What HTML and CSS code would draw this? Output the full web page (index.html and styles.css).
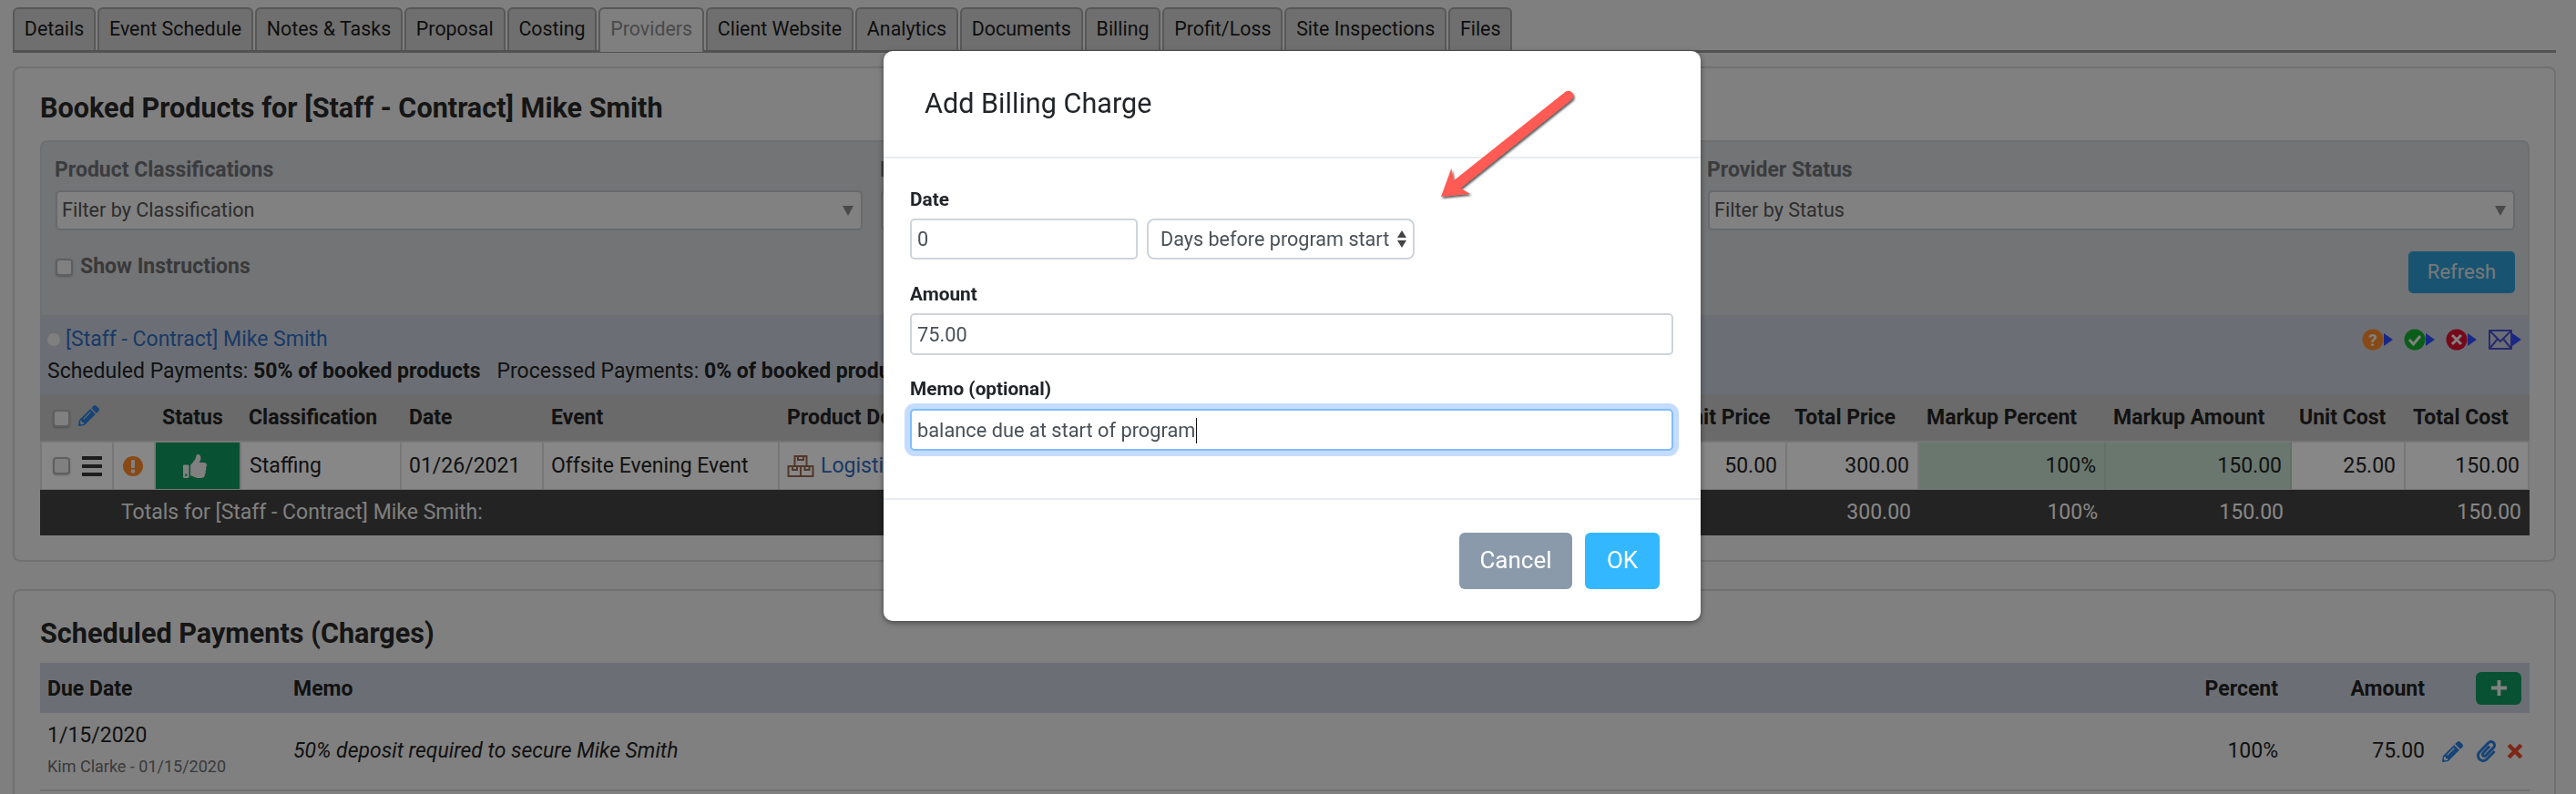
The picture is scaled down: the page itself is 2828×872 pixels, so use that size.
FILE: index.html
```html
<!DOCTYPE html>
<html lang="en">
<head>
<meta charset="utf-8">
<title>Add Billing Charge</title>
<link rel="stylesheet" href="styles.css">
</head>
<body>
<svg class="defs" aria-hidden="true">
  <symbol id="i-pencil" viewBox="0 0 512 512"><path d="M497.9 142.1l-46.1 46.1c-4.7 4.7-12.3 4.7-17 0l-111-111c-4.7-4.7-4.7-12.3 0-17l46.1-46.1c18.7-18.7 49.1-18.7 67.9 0l60.1 60.1c18.8 18.7 18.8 49.1 0 67.9zM284.2 99.8L21.6 362.4.4 483.9c-2.9 16.4 11.4 30.6 27.8 27.8l121.5-21.3 262.6-262.6c4.7-4.7 4.7-12.3 0-17l-111-111c-4.8-4.7-12.4-4.7-17.1 0zM124.1 339.9c-5.5-5.5-5.5-14.3 0-19.8l154-154c5.5-5.5 14.3-5.5 19.8 0s5.5 14.3 0 19.8l-154 154c-5.5 5.5-14.3 5.5-19.8 0zM88 424h48v36.3l-64.5 11.3-31.1-31.1L51.7 376H88v48z"/></symbol>
  <symbol id="i-arrow" viewBox="0 0 10 14"><path d="M0 0l10 7-10 7z"/></symbol>
</svg>

<nav class="tabs">
  <a class="tab">Details</a><a class="tab">Event Schedule</a><a class="tab">Notes &amp; Tasks</a><a class="tab">Proposal</a><a class="tab">Costing</a><a class="tab tab-active">Providers</a><a class="tab">Client Website</a><a class="tab">Analytics</a><a class="tab">Documents</a><a class="tab">Billing</a><a class="tab">Profit/Loss</a><a class="tab">Site Inspections</a><a class="tab">Files</a>
</nav>

<section class="panel panel-products">
  <h2 class="panel-title">Booked Products for [Staff - Contract] Mike Smith</h2>

  <div class="filters">
    <div class="filter-grid">
      <div class="filter">
        <div class="filter-label">Product Classifications</div>
        <div class="select"><span>Filter by Classification</span><i class="caret"></i></div>
      </div>
      <div class="filter">
        <div class="filter-label">Event Dates</div>
        <div class="select"><span>Filter by Event</span><i class="caret"></i></div>
      </div>
      <div class="filter">
        <div class="filter-label">Provider Status</div>
        <div class="select"><span>Filter by Status</span><i class="caret"></i></div>
      </div>
    </div>
    <div class="filter-actions">
      <label class="check-label"><span class="checkbox"></span>Show Instructions</label>
      <button class="btn-refresh">Refresh</button>
    </div>
  </div>

  <div class="provider">
    <div class="provider-top">
      <div class="provider-name"><span class="dot"></span><a class="link">[Staff - Contract] Mike Smith</a></div>
      <div class="provider-icons">
        <svg class="pi" viewBox="0 0 34 24"><circle cx="11" cy="12" r="11.500" fill="#ff8a2a"/><text x="11" y="19" class="pi-q">?</text><use href="#i-arrow" x="23" y="5" width="10" height="14" fill="#2f4cff"/></svg>
        <svg class="pi" viewBox="0 0 34 24"><circle cx="11" cy="12" r="11.500" fill="#14b030"/><path d="M5 12l4.500 5L17 8" fill="none" stroke="#f4f4f4" stroke-width="3"/><use href="#i-arrow" x="23" y="5" width="10" height="14" fill="#2f4cff"/></svg>
        <svg class="pi" viewBox="0 0 34 24"><circle cx="11" cy="12" r="11.500" fill="#e01030"/><path d="M6 7l10 10M16 7L6 17" fill="none" stroke="#f4f4f4" stroke-width="3"/><use href="#i-arrow" x="23" y="5" width="10" height="14" fill="#2f4cff"/></svg>
        <svg class="pi pi-mail" viewBox="0 0 37 24"><path d="M1 2h24v20H1zM1 2l12 12L25 2M1 22l9-11M25 22l-9-11" fill="none" stroke="#4a50d0" stroke-width="2"/><use href="#i-arrow" x="26" y="5" width="10" height="14" fill="#2f4cff"/></svg>
      </div>
    </div>
    <div class="provider-stats">Scheduled Payments: <b>50% of booked products</b><span class="stats-gap"></span>Processed Payments: <b>0% of booked products</b></div>
  </div>

  <table class="products">
    <colgroup>
      <col class="c-sel"><col class="c-flag"><col class="c-status"><col class="c-class"><col class="c-date"><col class="c-event"><col class="c-prod"><col class="c-uprice"><col class="c-tprice"><col class="c-mpct"><col class="c-mamt"><col class="c-ucost"><col class="c-tcost">
    </colgroup>
    <thead>
      <tr>
        <th class="th-sel" colspan="2"><span class="checkbox"></span><svg class="ic-pencil-head"><use href="#i-pencil"/></svg></th>
        <th class="th-status">Status</th><th>Classification</th><th>Date</th><th>Event</th><th>Product Description</th><th class="th-uprice">Unit Price</th><th>Total Price</th><th>Markup Percent</th><th>Markup Amount</th><th>Unit Cost</th><th>Total Cost</th>
      </tr>
    </thead>
    <tbody>
      <tr class="row">
        <td class="td-sel"><span class="checkbox"></span><span class="bars"><i></i><i></i><i></i></span></td>
        <td class="td-flag"><svg class="ic-alert" viewBox="0 0 22 22"><circle cx="11" cy="11" r="11" fill="#ff8a2a"/><rect x="9" y="4" width="4" height="9" rx="1" fill="#f2f2f2"/><circle cx="11" cy="16.500" r="2.200" fill="#f2f2f2"/></svg></td>
        <td class="td-status"><svg class="ic-thumb" viewBox="0 0 512 512"><path d="M104 224H24c-13.255 0-24 10.745-24 24v240c0 13.255 10.745 24 24 24h80c13.255 0 24-10.745 24-24V248c0-13.255-10.745-24-24-24zM64 472c-13.255 0-24-10.745-24-24s10.745-24 24-24 24 10.745 24 24-10.745 24-24 24zM384 81.452c0 42.416-25.97 66.208-33.277 94.548h101.723c33.397 0 59.397 27.746 59.553 58.098.084 17.938-7.546 37.249-19.439 49.197l-.11.11c9.836 23.337 8.237 56.037-9.308 79.469 8.681 25.895-.069 57.704-16.382 74.757 4.298 17.598 2.244 32.575-6.148 44.632C440.202 511.587 389.616 512 346.839 512l-2.845-.001c-48.287-.017-87.806-17.598-119.56-31.725-15.957-7.099-36.821-15.887-52.651-16.178-6.54-.12-11.783-5.457-11.783-11.998v-213.77c0-3.2 1.282-6.271 3.558-8.521 39.614-39.144 56.648-80.587 89.117-113.111 14.804-14.832 20.188-37.236 25.393-58.902C282.515 39.293 291.817 0 312 0c24 0 72 8 72 81.452z"/></svg></td>
        <td class="td-class">Staffing</td><td>01/26/2021</td><td>Offsite Evening Event</td>
        <td class="td-prod"><svg class="ic-boxes" viewBox="0 0 30 24"><path d="M8.500 1h13v11h-13zM12 1v4h6V1M1.500 12h13.500v11H1.500zM15 12h13.500v11H15zM6 12v4h5v-4M19.500 12v4h5v-4" fill="none" stroke="#9a6a50" stroke-width="2"/></svg><a class="link">Logistics Staff</a></td>
        <td class="num">50.00</td><td class="num">300.00</td><td class="num tint">100%</td><td class="num tint">150.00</td><td class="num">25.00</td><td class="num">150.00</td>
      </tr>
      <tr class="totals">
        <td colspan="7" class="totals-label">Totals for [Staff - Contract] Mike Smith:</td>
        <td></td><td class="num">300.00</td><td class="num">100%</td><td class="num">150.00</td><td></td><td class="num">150.00</td>
      </tr>
    </tbody>
  </table>
</section>

<section class="panel panel-payments">
  <h2 class="panel-title panel-title-2">Scheduled Payments (Charges)</h2>
  <div class="pay-head">
    <div class="pay-due">Due Date</div>
    <div class="pay-memo">Memo</div>
    <div class="pay-pct">Percent</div>
    <div class="pay-amt">Amount</div>
    <div class="pay-actions"><button class="btn-add"><svg class="ic-plus" viewBox="0 0 20 20"><path d="M10 1v18M1 10h18" stroke="#f4f4f4" stroke-width="4"/></svg></button></div>
  </div>
  <div class="pay-row">
    <div class="pay-due"><div class="pay-date">1/15/2020</div><div class="pay-by">Kim Clarke - 01/15/2020</div></div>
    <div class="pay-memo"><em>50% deposit required to secure Mike Smith</em></div>
    <div class="pay-pct">100%</div>
    <div class="pay-amt">75.00</div>
    <div class="pay-actions pay-icons">
      <svg class="ic-pencil"><use href="#i-pencil"/></svg>
      <svg class="ic-clip" viewBox="0 0 448 512"><path d="M43.246 466.142c-58.43-60.289-57.341-157.511 1.386-217.581L254.392 34c44.316-45.332 116.351-45.336 160.671 0 43.89 44.894 43.943 117.329 0 162.276L232.214 383.128c-29.855 30.537-78.633 30.111-107.982-.998-28.275-29.97-27.368-77.473 1.452-106.953l143.743-146.835c6.182-6.314 16.312-6.422 22.626-.241l22.861 22.379c6.315 6.182 6.422 16.312.241 22.626L171.427 319.927c-4.932 5.045-5.236 13.428-.648 18.292 4.372 4.634 11.245 4.711 15.688.165l182.849-186.851c19.613-20.062 19.613-52.725-.011-72.798-19.189-19.627-49.957-19.637-69.154 0L90.39 293.295c-34.763 35.56-35.299 93.12-1.191 128.313 34.01 35.093 88.985 35.137 123.058.286l172.06-175.999c6.177-6.319 16.307-6.433 22.626-.256l22.877 22.364c6.319 6.177 6.434 16.307.256 22.626l-172.06 175.998c-59.576 60.938-155.943 60.216-214.77-.485z"/></svg>
      <svg class="ic-x" viewBox="0 0 16 16"><path d="M2 2l12 12M14 2L2 14" stroke-width="4"/></svg>
    </div>
  </div>
</section>

<div class="backdrop"></div>

<div class="modal" role="dialog">
  <div class="modal-head"><h3 class="modal-title">Add Billing Charge</h3></div>
  <div class="modal-body">
    <div class="field-label">Date</div>
    <div class="date-row">
      <input class="input input-days" value="0">
      <div class="native-select"><span>Days before program start</span><span class="updown"><i class="up"></i><i class="down"></i></span></div>
    </div>
    <div class="field-label">Amount</div>
    <input class="input input-full" value="75.00">
    <div class="field-label field-label-memo">Memo (optional)</div>
    <div class="input input-full input-focus"><span>balance due at start of program</span><span class="text-caret"></span></div>
  </div>
  <div class="modal-foot">
    <button class="btn btn-cancel">Cancel</button>
    <button class="btn btn-ok">OK</button>
  </div>
</div>

<svg class="callout" viewBox="0 0 170 130" aria-hidden="true">
  <defs><filter id="arrow-shadow" x="-10%" y="-10%" width="125%" height="125%"><feDropShadow dx="1.500" dy="2" stdDeviation="1.200" flood-color="#000" flood-opacity=".65"/></filter></defs>
  <path filter="url(#arrow-shadow)" fill="#ff5a52" d="M148.600 5.700L26 103.300 23.300 90 12 121 44 117.700 33.300 111.700 155.400 14.300A5.500 5.500 0 0 0 148.600 5.700Z"/>
</svg>
</body>
</html>
```

FILE: styles.css
```css
* { box-sizing: border-box; }
html, body { margin: 0; height: 872px; overflow: hidden; }
body {
  background: #f0f0f0;
  color: #222;
  font-family: Roboto, "Liberation Sans", sans-serif;
  font-size: 23px;
  line-height: 28px;
  padding: 8px 22px 0 14px;
  position: relative;
}
.defs { display: none; }
b { font-weight: 700; }
.link { color: #2f6cc0; }

/* tabs */
.tabs {
  display: flex;
  gap: 2px;
  height: 50px;
  border-bottom: 3px solid #9c9c9c;
  font-size: 21.400px;
}
.tab {
  display: block;
  height: 47px;
  padding: 0 10.850px;
  line-height: 44px;
  color: #1c1c1c;
  background: #d2d2d2;
  border: 2px solid #a6a6a6;
  border-bottom: 0;
  border-radius: 6px 6px 0 0;
}
.tab-active { background: #f0f0f0; color: #8c8c8c; height: 49px; position: relative; }

/* panels */
.panel {
  background: #f2f2f2;
  border: 2px solid #d4d4d4;
  border-radius: 8px;
  padding: 0 27px 0 28px;
}
.panel-products { margin-top: 15px; height: 544px; }
.panel-payments { margin-top: 30px; height: 300px; }
.panel-title {
  margin: 0;
  height: 79px;
  padding-top: 27px;
  font-size: 30.600px;
  line-height: 34px;
  font-weight: 700;
  color: #282828;
}
.panel-title-2 { padding-top: 30px; }

/* filters */
.filters {
  background: #d9dbdf;
  border: 2px solid #d0d2d6;
  border-bottom: 0;
  border-radius: 8px 8px 0 0;
  height: 192px;
  padding: 17px 14px 0 15px;
}
.filter-grid { display: grid; grid-template-columns: 886px 888px 886px; column-gap: 20px; }
.filter-label { color: #6f7276; font-weight: 700; margin: 0 0 8px -1px; }
.select {
  height: 44px;
  background: #f3f3f3;
  border: 2px solid #c2c6cc;
  border-radius: 5px;
  padding: 0 8px 0 5px;
  line-height: 40px;
  font-size: 21.600px;
  color: #555;
  display: flex;
  justify-content: space-between;
  align-items: center;
}
.caret {
  width: 0; height: 0;
  border-left: 6px solid transparent;
  border-right: 6px solid transparent;
  border-top: 11px solid #8a8a8a;
}
.filter-actions { display: flex; justify-content: space-between; align-items: flex-start; margin-top: 23px; }
.check-label { display: flex; align-items: center; gap: 8px; color: #6d6d6d; font-weight: 700; margin-top: 3px; }
.checkbox {
  display: inline-block;
  flex: none;
  width: 19px; height: 19px;
  background: #f2f2f2;
  border: 2px solid #b4b4b4;
  border-radius: 4px;
  box-shadow: 0 1px 2px rgba(0,0,0,.25);
}
.btn-refresh {
  width: 117px; height: 46px;
  padding: 0 0 2px;
  border: 0; border-radius: 5px;
  background: #2f9fd8;
  color: #e4e4e4;
  font: 400 22px Roboto, sans-serif;
}

/* provider strip */
.provider {
  height: 87px;
  background: #cbd2de;
  border-top: 3px solid #d0d2d6;
  padding: 10px 8px 0 8px;
}
.provider-top { display: flex; justify-content: space-between; align-items: center; height: 28px; }
.provider-name { display: flex; align-items: center; gap: 6px; }
.dot { width: 14px; height: 14px; border-radius: 50%; background: #f0f0f0; }
.provider-icons { display: flex; gap: 12px; }
.pi { width: 34px; height: 24px; display: block; overflow: visible; }
.pi-mail { width: 37px; }
.pi-q { font: 700 19px Roboto, sans-serif; fill: #f4f4f4; text-anchor: middle; }
.provider-stats { margin-top: 7px; white-space: nowrap; }
.stats-gap { display: inline-block; width: 18px; }

/* products table */
.products {
  width: 2733px;
  table-layout: fixed;
  border-collapse: separate;
  border-spacing: 0;
}
.c-sel { width: 81px; } .c-flag { width: 46px; } .c-status { width: 94px; }
.c-class { width: 176px; } .c-date { width: 156px; } .c-event { width: 259px; }
.c-prod { width: 979px; } .c-uprice { width: 127px; } .c-tprice { width: 145px; }
.c-mpct { width: 205px; } .c-mamt { width: 204px; } .c-ucost { width: 125px; } .c-tcost { width: 136px; }
.products th {
  height: 51px;
  background: #c8c8c8;
  text-align: left;
  padding: 0 8px;
  font-weight: 700;
  white-space: nowrap;
  overflow: hidden;
}
.products .th-sel { padding: 0 0 0 14px; }
.th-sel .checkbox { vertical-align: middle; }
.ic-pencil-head { width: 23px; height: 23px; fill: #2c80e0; vertical-align: middle; margin: -6px 0 0 9px; }
.products .th-status { padding-left: 7px; }
.products .th-uprice { padding-left: 7px; }
.row td {
  height: 54px;
  background: #fff;
  border: 1px solid #e0e0e0;
  border-width: 2px 2px 1px 0;
  padding: 0 8px;
  white-space: nowrap;
  overflow: hidden;
}
.row td:first-child { border-left-width: 2px; }
.row .td-sel { padding: 0 0 0 12px; }
.row .td-class { padding-left: 9px; }
.td-sel { line-height: 0; }
.td-sel > * { vertical-align: middle; }
.bars { display: inline-flex; flex-direction: column; gap: 5px; margin-left: 13px; }
.bars i { display: block; width: 22px; height: 4px; background: #3a3a3a; }
.row .td-flag { padding: 0 0 0 10px; }
.ic-alert { width: 22px; height: 22px; display: block; }
.row .td-status { background: #129a60; text-align: center; padding: 0 6px 0 0; }
.ic-thumb { width: 26px; height: 26px; fill: #f2f2f2; display: inline-block; vertical-align: middle; }
.ic-boxes { width: 30px; height: 24px; vertical-align: middle; margin-right: 7px; }
.num { text-align: right; }
.row .num { padding-right: 9px; }
.row .tint { background: #c8e0d2; border-right-color: #bcd4c6; }
.totals td { height: 50px; background: #424242; color: #fff; padding: 0 9px; }
.totals .totals-label { padding-left: 89px; color: #f0f0f0; }

/* payments */
.pay-head, .pay-row { display: flex; width: 2733px; padding: 0 8px; }
.pay-head {
  height: 55px;
  padding-top: 2px;
  background: #cbd2de;
  align-items: center;
  font-weight: 700;
}
.pay-row {
  height: 86px;
  align-items: center;
  border-bottom: 2px solid #d4d4d4;
}
.pay-due { width: 270px; }
.pay-memo { flex: 1; }
.pay-pct { width: 120px; text-align: right; }
.pay-amt { width: 161px; text-align: right; }
.pay-actions { width: 107px; display: flex; justify-content: flex-end; }
.pay-date { margin-top: -4px; }
.pay-by { font-size: 18px; color: #6e6e6e; margin-top: 9px; line-height: 22px; }
.btn-add {
  width: 50px; height: 36px;
  margin: -2px 1px 0 0;
  padding: 0; border: 0; border-radius: 6px;
  background: #129a60;
  display: flex; align-items: center; justify-content: center;
}
.ic-plus { width: 19px; height: 19px; }
.pay-icons { align-items: center; justify-content: flex-start; padding-left: 19px; }
.ic-pencil { width: 23px; height: 23px; fill: #2c80e0; flex: none; }
.ic-clip { width: 21px; height: 24px; fill: #2c80e0; margin-left: 15px; flex: none; }
.ic-x { width: 18px; height: 18px; stroke: #f04a2c; margin-left: 12px; flex: none; }

/* modal */
.backdrop { position: fixed; inset: 0; background: rgba(0,0,0,.47); }
.modal {
  position: absolute;
  left: 970px; top: 56px;
  width: 897px; height: 626px;
  background: #fff;
  border-radius: 10px;
  box-shadow: 0 2px 6px rgba(0,0,0,.45);
  color: #212529;
}
.modal-head { height: 118px; border-bottom: 2px solid #e8ebef; padding: 40px 45px 0; }
.modal-title { margin: 0; font-size: 30.600px; line-height: 36px; font-weight: 400; }
.modal-body { height: 373px; padding: 31px 30px 0 29px; }
.field-label { font-weight: 700; font-size: 20.800px; line-height: 28px; margin-bottom: 7px; }
.field-label-memo { margin-bottom: 8px; }
.input {
  display: block;
  height: 46px;
  padding: 0 6px;
  border: 2px solid #ced4da;
  border-radius: 5px;
  font: 400 21.800px/42px Roboto, sans-serif;
  color: #495057;
  background: #fff;
  outline: 0;
}
.input-full { width: 838px; margin-bottom: 23px; }
.input-days { width: 250px; height: 45px; margin: 0; }
.date-row { display: flex; gap: 10px; margin-bottom: 24px; }
.native-select {
  width: 294px; height: 45px;
  border: 2px solid #ced4da;
  border-radius: 8px;
  padding: 0 7px 0 13px;
  display: flex;
  justify-content: space-between;
  align-items: center;
  font-size: 21.600px;
  color: #495057;
}
.updown { display: flex; flex-direction: column; gap: 3px; }
.updown i { display: block; width: 0; height: 0; border-left: 5px solid transparent; border-right: 5px solid transparent; }
.updown .up { border-bottom: 8px solid #444; }
.updown .down { border-top: 8px solid #444; }
.input-focus {
  height: 46px;
  padding-top: 2px;
  border-color: #80bdff;
  box-shadow: 0 0 0 6px #c4dcff;
  color: #495057;
  display: flex;
  align-items: center;
  margin: 0;
}
.text-caret { display: inline-block; width: 1px; height: 28px; background: #111; margin-left: 1px; }
.modal-foot {
  height: 133px;
  border-top: 2px solid #e8ebef;
  padding: 36px 45px 0 0;
  display: flex;
  justify-content: flex-end;
  gap: 14px;
}
.btn { height: 62px; padding: 0 0 2px; border: 0; border-radius: 6px; color: #fff; font: 400 26px Roboto, sans-serif; }
.btn-cancel { width: 124px; background: #8a9aab; }
.btn-ok { width: 82px; background: #33b8ff; }

.callout { position: absolute; left: 1570px; top: 95px; width: 170px; height: 130px; overflow: visible; }
```
